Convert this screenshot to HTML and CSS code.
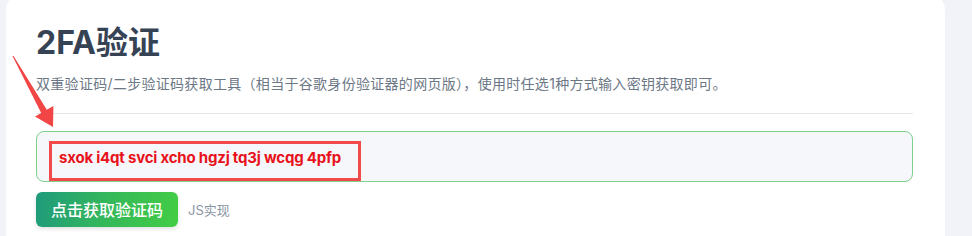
FILE: index.html
```html
<!DOCTYPE html>
<html lang="zh-CN">
<head>
    <meta charset="UTF-8">
    <meta name="viewport" content="width=device-width, initial-scale=1.0">
    <title>2FA验证 - 双重验证码获取工具</title>
    <link rel="stylesheet" href="styles.css">
</head>
<body>
    <div class="card">
        <h1 class="title">2FA验证</h1>
        <p class="subtitle">双重验证码/二步验证码获取工具（相当于谷歌身份验证器的网页版），使用时任选1种方式输入密钥获取即可。</p>
        <hr class="divider">

        <div class="secret-input">
            <span class="secret-value">sxok i4qt svci xcho hgzj tq3j wcqg 4pfp</span>
            <span class="mark-box"></span>
        </div>

        <div class="actions">
            <button class="button">点击获取验证码</button>
            <span class="note">JS实现</span>
        </div>

        <!-- annotation arrow -->
        <svg class="mark-arrow" width="70" height="140" viewBox="0 0 70 140">
            <polygon points="12.6,56.2 13.4,55.8 46.8,109.8 53.4,106 53,127 35,116.6 41.2,113" fill="#f24545"/>
        </svg>
    </div>
</body>
</html>
```

FILE: styles.css
```css
* {
    box-sizing: border-box;
    margin: 0;
    padding: 0;
}

html, body {
    height: 236px;
    overflow: hidden;
}

body {
    font-family: Inter, "Noto Sans CJK SC", sans-serif;
    background-color: #f1f3f8;
    color: #3b4758;
}

.card {
    position: relative;
    width: 939px;
    margin: -6px 0 0 6px;
    padding: 30px 32px 10px 30px;
    background: #fff;
    border-radius: 16px;
    min-height: 270px;
}

.title {
    font-size: 32px;
    font-weight: 700;
    line-height: 1.21;
    color: #364354;
}

.subtitle {
    margin-top: 10px;
    font-size: 14px;
    line-height: 22px;
    color: #6d7886;
    letter-spacing: 0.3px;
}

.divider {
    border: none;
    border-top: 1px solid #e6e8ec;
    margin-top: 18px;
}

.secret-input {
    position: relative;
    display: flex;
    align-items: center;
    height: 51px;
    margin-top: 17px;
    padding: 2px 0 0 22px;
    background: #f5f7fa;
    border: 1px solid #7fd08c;
    border-radius: 8px;
}

.secret-value {
    font-size: 15px;
    font-weight: 700;
    letter-spacing: -0.2px;
    color: #e8121a;
}

.mark-box {
    position: absolute;
    left: 12px;
    top: 9px;
    width: 312px;
    height: 40px;
    border: 3px solid #f24a4a;
}

.actions {
    display: flex;
    align-items: center;
    margin-top: 10px;
}

.button {
    height: 35px;
    padding: 0 15px;
    border: none;
    border-radius: 6px;
    background: linear-gradient(100deg, #1f9a7c 0%, #35b85a 50%, #42cd44 100%);
    box-shadow: 0 2px 4px rgba(0, 0, 0, 0.12);
    color: #fff;
    font-family: "Noto Sans CJK SC", sans-serif;
    font-size: 16px;
    font-weight: 500;
    cursor: pointer;
}

.note {
    margin-left: 10px;
    font-size: 13px;
    color: #8a95a2;
}

.mark-arrow {
    position: absolute;
    left: -6px;
    top: 6px;
}
```
